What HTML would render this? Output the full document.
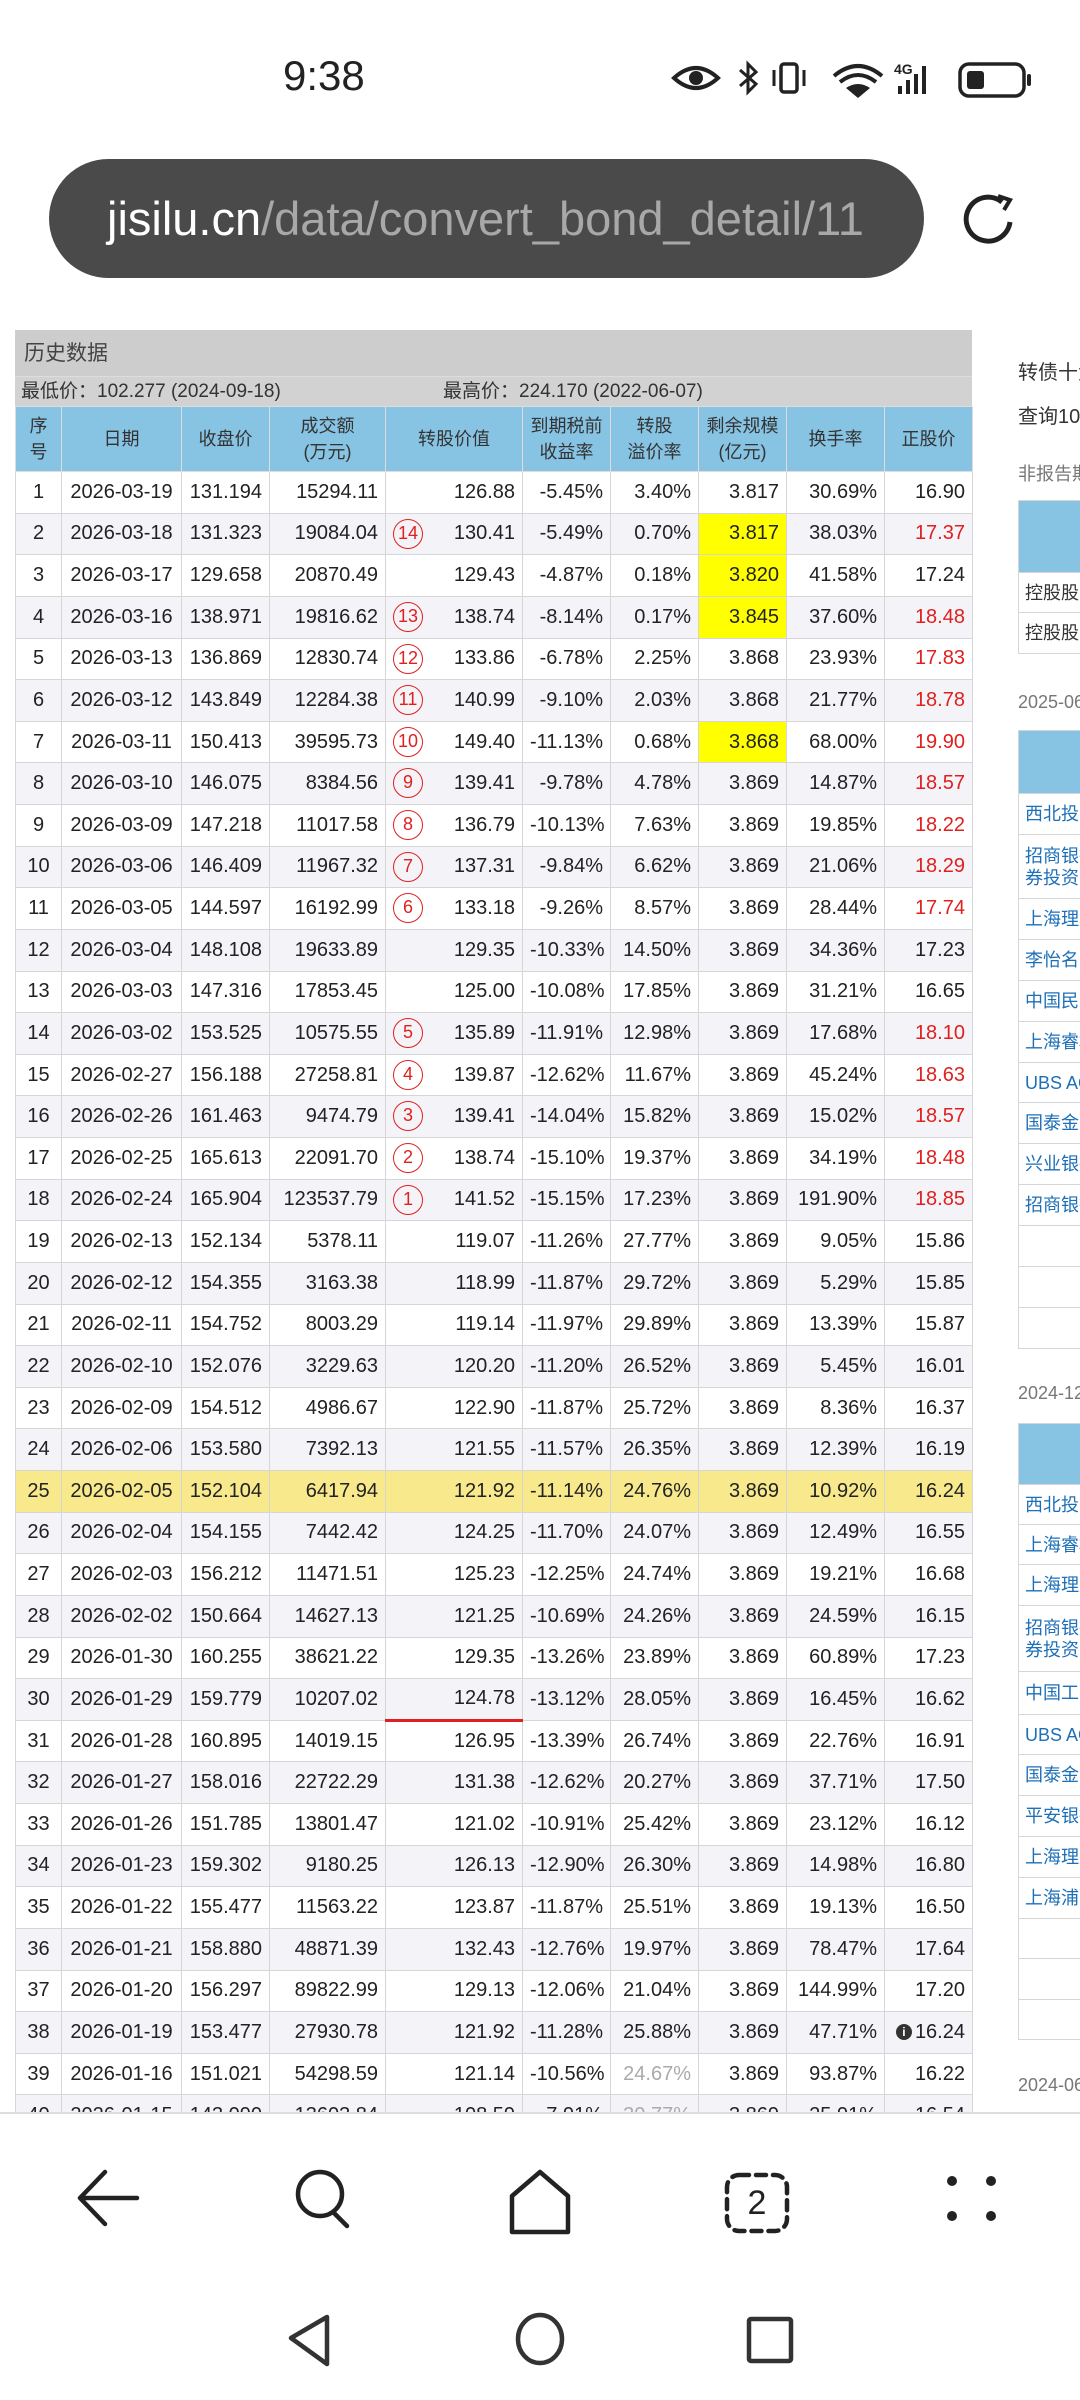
<!DOCTYPE html>
<html><head><meta charset="utf-8">
<style>
*{margin:0;padding:0;box-sizing:border-box}
body{width:1080px;height:2400px;background:#fff;position:relative;overflow:hidden;font-family:"Liberation Sans","Noto Sans CJK SC",sans-serif;color:#222}
.time{position:absolute;left:283px;top:52px;font-size:42px;color:#222}
.url{position:absolute;left:49px;top:159px;width:875px;height:119px;background:#4a4a4a;border-radius:60px;overflow:hidden;white-space:nowrap;font-size:47px;line-height:119px;padding-left:58px;color:#a8a8a8}
.url b{font-weight:normal;color:#fff}
.page{position:absolute;left:0;top:300px;width:1080px;height:1814px;overflow:hidden;border-bottom:2px solid #ddd}
.box{position:absolute;left:15px;top:30px;width:957px;background:#cdcdcd}
.ttl{height:47px;font-size:21px;line-height:47px;padding-left:9px;color:#444;border-bottom:1px solid #ddd}
.mn{height:29px;font-size:19px;line-height:29px;color:#333;background:#d2d2d2;position:relative;padding-left:6px}
.mn span{position:absolute;left:428px}
table{border-collapse:collapse;table-layout:fixed;width:957px;background:#fff}
th{background:#87c3e3;font-weight:normal;font-size:18px;color:#333;height:65px;border:1px solid #ddd;line-height:26px}
td{height:41.64px;border:1px solid #d6d6d6;font-size:20px;text-align:right;padding:0 7px;white-space:nowrap;color:#222;position:relative}
tr:nth-child(odd) td{background:#f3f3f8}
td:nth-child(1),td:nth-child(2){text-align:center;padding:0 2px}
.c{position:absolute;left:7px;top:5px;width:30px;height:30px;border:1.5px solid #e02020;border-radius:50%;color:#e02020;font-size:18px;line-height:27px;text-align:center}
.r{color:#e0201f}
td.y{background:#ffff00!important}
tr.hl td{background:#f8e98c!important}
.g{color:#aaa}
.ul{border-bottom:3px solid #e02020}
.info{display:inline-block;width:16px;height:16px;border-radius:50%;background:#333;color:#fff;font-size:12px;line-height:16px;text-align:center;font-weight:bold;vertical-align:2px;margin-right:3px}
.side{position:absolute;left:1018px;top:0;width:200px;font-size:19px;color:#333}
.side .t{position:absolute;left:0;white-space:nowrap}
.st{position:absolute;left:0;width:200px;border-collapse:collapse}
.st td{background:#fff!important;text-align:left;border:1px solid #d6d6d6;color:#1d6fb8;font-size:18px;padding:0 6px;line-height:22px;height:auto}
.st td.h{background:#87c3e3!important}
.nav{position:absolute;top:2165px;left:0;width:1080px}
</style></head><body>
<div class="time">9:38</div>
<svg style="position:absolute;left:668px;top:56px" width="380" height="50" viewBox="0 0 380 50">
<path d="M6 22 Q28 2 50 22 Q28 42 6 22Z" fill="none" stroke="#222" stroke-width="4"/><circle cx="28" cy="22" r="7" fill="#222"/>
<path d="M72 14 L88 28 L80 36 L80 8 L88 16 L72 30" fill="none" stroke="#222" stroke-width="3"/>
<rect x="113" y="8" width="16" height="28" rx="3" fill="none" stroke="#222" stroke-width="3.5"/><path d="M106 14v16M136 14v16" stroke="#222" stroke-width="3"/>
<path d="M166 20 Q190 0 214 20" fill="none" stroke="#222" stroke-width="4"/><path d="M172 26 Q190 12 208 26" fill="none" stroke="#222" stroke-width="4"/><path d="M178 32 Q190 24 202 32 L190 42Z" fill="#222"/>
<text x="226" y="18" font-size="14" font-weight="bold" fill="#222" font-family="Liberation Sans">4G</text>
<path d="M230 38h4v-8h-4zM238 38h4v-14h-4zM246 38h4v-20h-4zM254 38h4v-28h-4z" fill="#222"/>
<rect x="292" y="8" width="64" height="32" rx="9" fill="none" stroke="#222" stroke-width="3.5"/><rect x="299" y="15" width="17" height="18" rx="3" fill="#222"/><rect x="359" y="18" width="4" height="12" rx="2" fill="#222"/>
</svg>
<div class="url"><b>jisilu.cn</b>/data/convert_bond_detail/11</div>
<svg style="position:absolute;left:958px;top:190px" width="64" height="60" viewBox="0 0 64 60"><path d="M44 12 A22 22 0 1 0 52 32" fill="none" stroke="#222" stroke-width="5"/><path d="M40 6 L52 10 L46 20" fill="none" stroke="#222" stroke-width="4"/></svg>

<div class="page">
<div class="box">
<div class="ttl">历史数据</div>
<div class="mn">最低价：102.277 (2024-09-18)<span>最高价：224.170 (2022-06-07)</span></div>
<table>
<colgroup><col style="width:46px"><col style="width:120px"><col style="width:88px"><col style="width:116px"><col style="width:137px"><col style="width:88px"><col style="width:88px"><col style="width:88px"><col style="width:98px"><col style="width:88px"></colgroup>
<tr><th>序<br>号</th><th>日期</th><th>收盘价</th><th>成交额<br>(万元)</th><th>转股价值</th><th>到期税前<br>收益率</th><th>转股<br>溢价率</th><th>剩余规模<br>(亿元)</th><th>换手率</th><th>正股价</th></tr>
<tr><td>1</td><td>2026-03-19</td><td>131.194</td><td>15294.11</td><td>126.88</td><td>-5.45%</td><td>3.40%</td><td>3.817</td><td>30.69%</td><td>16.90</td></tr>
<tr><td>2</td><td>2026-03-18</td><td>131.323</td><td>19084.04</td><td><span class="c">14</span>130.41</td><td>-5.49%</td><td>0.70%</td><td class="y">3.817</td><td>38.03%</td><td class="r">17.37</td></tr>
<tr><td>3</td><td>2026-03-17</td><td>129.658</td><td>20870.49</td><td>129.43</td><td>-4.87%</td><td>0.18%</td><td class="y">3.820</td><td>41.58%</td><td>17.24</td></tr>
<tr><td>4</td><td>2026-03-16</td><td>138.971</td><td>19816.62</td><td><span class="c">13</span>138.74</td><td>-8.14%</td><td>0.17%</td><td class="y">3.845</td><td>37.60%</td><td class="r">18.48</td></tr>
<tr><td>5</td><td>2026-03-13</td><td>136.869</td><td>12830.74</td><td><span class="c">12</span>133.86</td><td>-6.78%</td><td>2.25%</td><td>3.868</td><td>23.93%</td><td class="r">17.83</td></tr>
<tr><td>6</td><td>2026-03-12</td><td>143.849</td><td>12284.38</td><td><span class="c">11</span>140.99</td><td>-9.10%</td><td>2.03%</td><td>3.868</td><td>21.77%</td><td class="r">18.78</td></tr>
<tr><td>7</td><td>2026-03-11</td><td>150.413</td><td>39595.73</td><td><span class="c">10</span>149.40</td><td>-11.13%</td><td>0.68%</td><td class="y">3.868</td><td>68.00%</td><td class="r">19.90</td></tr>
<tr><td>8</td><td>2026-03-10</td><td>146.075</td><td>8384.56</td><td><span class="c">9</span>139.41</td><td>-9.78%</td><td>4.78%</td><td>3.869</td><td>14.87%</td><td class="r">18.57</td></tr>
<tr><td>9</td><td>2026-03-09</td><td>147.218</td><td>11017.58</td><td><span class="c">8</span>136.79</td><td>-10.13%</td><td>7.63%</td><td>3.869</td><td>19.85%</td><td class="r">18.22</td></tr>
<tr><td>10</td><td>2026-03-06</td><td>146.409</td><td>11967.32</td><td><span class="c">7</span>137.31</td><td>-9.84%</td><td>6.62%</td><td>3.869</td><td>21.06%</td><td class="r">18.29</td></tr>
<tr><td>11</td><td>2026-03-05</td><td>144.597</td><td>16192.99</td><td><span class="c">6</span>133.18</td><td>-9.26%</td><td>8.57%</td><td>3.869</td><td>28.44%</td><td class="r">17.74</td></tr>
<tr><td>12</td><td>2026-03-04</td><td>148.108</td><td>19633.89</td><td>129.35</td><td>-10.33%</td><td>14.50%</td><td>3.869</td><td>34.36%</td><td>17.23</td></tr>
<tr><td>13</td><td>2026-03-03</td><td>147.316</td><td>17853.45</td><td>125.00</td><td>-10.08%</td><td>17.85%</td><td>3.869</td><td>31.21%</td><td>16.65</td></tr>
<tr><td>14</td><td>2026-03-02</td><td>153.525</td><td>10575.55</td><td><span class="c">5</span>135.89</td><td>-11.91%</td><td>12.98%</td><td>3.869</td><td>17.68%</td><td class="r">18.10</td></tr>
<tr><td>15</td><td>2026-02-27</td><td>156.188</td><td>27258.81</td><td><span class="c">4</span>139.87</td><td>-12.62%</td><td>11.67%</td><td>3.869</td><td>45.24%</td><td class="r">18.63</td></tr>
<tr><td>16</td><td>2026-02-26</td><td>161.463</td><td>9474.79</td><td><span class="c">3</span>139.41</td><td>-14.04%</td><td>15.82%</td><td>3.869</td><td>15.02%</td><td class="r">18.57</td></tr>
<tr><td>17</td><td>2026-02-25</td><td>165.613</td><td>22091.70</td><td><span class="c">2</span>138.74</td><td>-15.10%</td><td>19.37%</td><td>3.869</td><td>34.19%</td><td class="r">18.48</td></tr>
<tr><td>18</td><td>2026-02-24</td><td>165.904</td><td>123537.79</td><td><span class="c">1</span>141.52</td><td>-15.15%</td><td>17.23%</td><td>3.869</td><td>191.90%</td><td class="r">18.85</td></tr>
<tr><td>19</td><td>2026-02-13</td><td>152.134</td><td>5378.11</td><td>119.07</td><td>-11.26%</td><td>27.77%</td><td>3.869</td><td>9.05%</td><td>15.86</td></tr>
<tr><td>20</td><td>2026-02-12</td><td>154.355</td><td>3163.38</td><td>118.99</td><td>-11.87%</td><td>29.72%</td><td>3.869</td><td>5.29%</td><td>15.85</td></tr>
<tr><td>21</td><td>2026-02-11</td><td>154.752</td><td>8003.29</td><td>119.14</td><td>-11.97%</td><td>29.89%</td><td>3.869</td><td>13.39%</td><td>15.87</td></tr>
<tr><td>22</td><td>2026-02-10</td><td>152.076</td><td>3229.63</td><td>120.20</td><td>-11.20%</td><td>26.52%</td><td>3.869</td><td>5.45%</td><td>16.01</td></tr>
<tr><td>23</td><td>2026-02-09</td><td>154.512</td><td>4986.67</td><td>122.90</td><td>-11.87%</td><td>25.72%</td><td>3.869</td><td>8.36%</td><td>16.37</td></tr>
<tr><td>24</td><td>2026-02-06</td><td>153.580</td><td>7392.13</td><td>121.55</td><td>-11.57%</td><td>26.35%</td><td>3.869</td><td>12.39%</td><td>16.19</td></tr>
<tr class="hl"><td>25</td><td>2026-02-05</td><td>152.104</td><td>6417.94</td><td>121.92</td><td>-11.14%</td><td>24.76%</td><td>3.869</td><td>10.92%</td><td>16.24</td></tr>
<tr><td>26</td><td>2026-02-04</td><td>154.155</td><td>7442.42</td><td>124.25</td><td>-11.70%</td><td>24.07%</td><td>3.869</td><td>12.49%</td><td>16.55</td></tr>
<tr><td>27</td><td>2026-02-03</td><td>156.212</td><td>11471.51</td><td>125.23</td><td>-12.25%</td><td>24.74%</td><td>3.869</td><td>19.21%</td><td>16.68</td></tr>
<tr><td>28</td><td>2026-02-02</td><td>150.664</td><td>14627.13</td><td>121.25</td><td>-10.69%</td><td>24.26%</td><td>3.869</td><td>24.59%</td><td>16.15</td></tr>
<tr><td>29</td><td>2026-01-30</td><td>160.255</td><td>38621.22</td><td>129.35</td><td>-13.26%</td><td>23.89%</td><td>3.869</td><td>60.89%</td><td>17.23</td></tr>
<tr><td>30</td><td>2026-01-29</td><td>159.779</td><td>10207.02</td><td class="ul">124.78</td><td>-13.12%</td><td>28.05%</td><td>3.869</td><td>16.45%</td><td>16.62</td></tr>
<tr><td>31</td><td>2026-01-28</td><td>160.895</td><td>14019.15</td><td>126.95</td><td>-13.39%</td><td>26.74%</td><td>3.869</td><td>22.76%</td><td>16.91</td></tr>
<tr><td>32</td><td>2026-01-27</td><td>158.016</td><td>22722.29</td><td>131.38</td><td>-12.62%</td><td>20.27%</td><td>3.869</td><td>37.71%</td><td>17.50</td></tr>
<tr><td>33</td><td>2026-01-26</td><td>151.785</td><td>13801.47</td><td>121.02</td><td>-10.91%</td><td>25.42%</td><td>3.869</td><td>23.12%</td><td>16.12</td></tr>
<tr><td>34</td><td>2026-01-23</td><td>159.302</td><td>9180.25</td><td>126.13</td><td>-12.90%</td><td>26.30%</td><td>3.869</td><td>14.98%</td><td>16.80</td></tr>
<tr><td>35</td><td>2026-01-22</td><td>155.477</td><td>11563.22</td><td>123.87</td><td>-11.87%</td><td>25.51%</td><td>3.869</td><td>19.13%</td><td>16.50</td></tr>
<tr><td>36</td><td>2026-01-21</td><td>158.880</td><td>48871.39</td><td>132.43</td><td>-12.76%</td><td>19.97%</td><td>3.869</td><td>78.47%</td><td>17.64</td></tr>
<tr><td>37</td><td>2026-01-20</td><td>156.297</td><td>89822.99</td><td>129.13</td><td>-12.06%</td><td>21.04%</td><td>3.869</td><td>144.99%</td><td>17.20</td></tr>
<tr><td>38</td><td>2026-01-19</td><td>153.477</td><td>27930.78</td><td>121.92</td><td>-11.28%</td><td>25.88%</td><td>3.869</td><td>47.71%</td><td><span class="info">i</span>16.24</td></tr>
<tr><td>39</td><td>2026-01-16</td><td>151.021</td><td>54298.59</td><td>121.14</td><td>-10.56%</td><td class="g">24.67%</td><td>3.869</td><td>93.87%</td><td>16.22</td></tr>
<tr><td>40</td><td>2026-01-15</td><td>143.090</td><td>13603.84</td><td>108.59</td><td>-7.91%</td><td class="g">30.77%</td><td>3.869</td><td>25.91%</td><td>16.54</td></tr>
</table>
</div>

<div class="side">
<div class="t" style="top:56px;font-size:20px">转债十大持有人</div>
<div class="t" style="top:100px;font-size:20px">查询10大持有人</div>
<div class="t" style="top:160px;font-size:18px;color:#777">非报告期</div>
<table class="st" style="top:200px"><tr><td class="h" style="height:72px"></td></tr><tr><td style="height:40px;color:#333">控股股东</td></tr><tr><td style="height:41px;color:#333">控股股东</td></tr></table>
<div class="t" style="top:392px;font-size:18px;color:#777">2025-06-30</div>
<table class="st" style="top:430px"><tr><td class="h" style="height:63px"></td></tr>
<tr><td style="height:41px">西北投资</td></tr><tr><td style="height:64px">招商银行<br>券投资</td></tr><tr><td style="height:41px">上海理成</td></tr><tr><td style="height:41px">李怡名</td></tr><tr><td style="height:41px">中国民生</td></tr><tr><td style="height:41px">上海睿郡</td></tr><tr><td style="height:40px">UBS AG</td></tr><tr><td style="height:41px">国泰金融</td></tr><tr><td style="height:41px">兴业银行</td></tr><tr><td style="height:41px">招商银行</td></tr><tr><td style="height:41px"></td></tr><tr><td style="height:41px"></td></tr><tr><td style="height:41px"></td></tr></table>
<div class="t" style="top:1083px;font-size:18px;color:#777">2024-12-31</div>
<table class="st" style="top:1123px"><tr><td class="h" style="height:61px"></td></tr>
<tr><td style="height:40px">西北投资</td></tr><tr><td style="height:40px">上海睿郡</td></tr><tr><td style="height:41px">上海理成</td></tr><tr><td style="height:66px">招商银行<br>券投资</td></tr><tr><td style="height:43px">中国工商</td></tr><tr><td style="height:40px">UBS AG</td></tr><tr><td style="height:41px">国泰金融</td></tr><tr><td style="height:41px">平安银行</td></tr><tr><td style="height:41px">上海理成</td></tr><tr><td style="height:41px">上海浦东</td></tr><tr><td style="height:40px"></td></tr><tr><td style="height:41px"></td></tr><tr><td style="height:40px"></td></tr></table>
<div class="t" style="top:1775px;font-size:18px;color:#777">2024-06-30</div>
</div>
</div>

<svg class="nav" width="1080" height="235" viewBox="0 2165 1080 235">
<g fill="none" stroke="#222" stroke-width="4.5" stroke-linecap="round" stroke-linejoin="round">
<path d="M137 2198H80M105 2172L80 2198L105 2224"/>
<circle cx="320" cy="2194" r="22"/><path d="M334 2213L347 2226"/>
<path d="M512 2232V2196L540 2172L568 2196V2232Z"/>
<rect x="727" y="2175" width="60" height="56" rx="12" stroke-dasharray="10 7"/>
</g>
<text x="757" y="2214" font-size="34" text-anchor="middle" fill="#222" font-family="Liberation Sans">2</text>
<g fill="#222"><circle cx="952" cy="2181" r="5"/><circle cx="991" cy="2181" r="5"/><circle cx="952" cy="2216" r="5"/><circle cx="991" cy="2216" r="5"/></g>
<g fill="none" stroke="#333" stroke-width="4.5" stroke-linejoin="round">
<path d="M327 2317L291 2338L327 2364Z"/>
<ellipse cx="540" cy="2339" rx="22" ry="24"/>
<rect x="749" y="2319" width="42" height="42" rx="2"/>
</g>
</svg>
</body></html>
